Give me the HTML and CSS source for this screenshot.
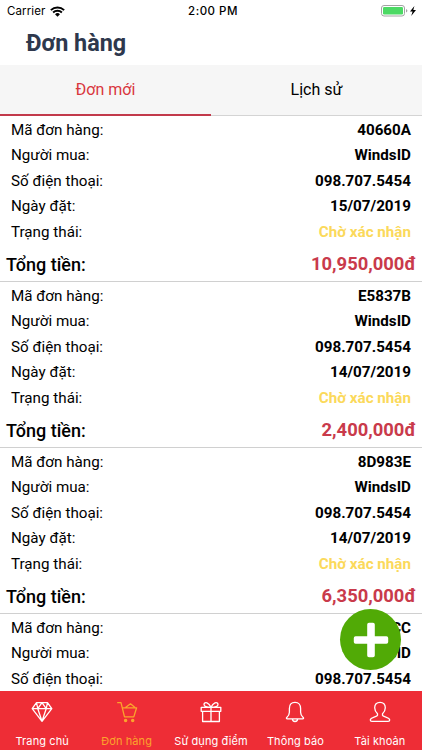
FILE: index.html
```
<!DOCTYPE html>
<html lang="vi">
<head>
    <meta charset="UTF-8">
    <meta name="viewport" content="width=device-width, initial-scale=1.0">
    <title>Đơn hàng</title>
    <link rel="stylesheet" href="styles.css">
</head>
<body>

    <div class="status-bar">
        <div class="carrier">
            <span>Carrier</span>
            <svg class="wifi" viewBox="0 0 14 10" width="15" height="11">
                <path d="M0.8 3.7a9 9 0 0 1 12.4 0M2.9 6a6 6 0 0 1 8.2 0" fill="none" stroke="#000" stroke-width="1.8"/>
                <path d="M7 10L4.7 7.6a3.3 3.3 0 0 1 4.6 0z"/>
            </svg>
        </div>
        <div class="clock">2:00 PM</div>
        <div class="battery">
            <svg viewBox="0 0 38 12" width="38" height="12">
                <rect x="0.5" y="0.5" width="23" height="10.5" rx="2.5" fill="#fff" stroke="#a3a3a3"/>
                <rect x="2" y="2" width="20" height="7.5" rx="1.2" fill="#4cd964"/>
                <path d="M25 4v3.6q1.4-.6 1.4-1.8T25 4z" fill="#a3a3a3"/>
                <path d="M33.4 1L29 6.6h2.6L30.2 11l4.8-5.9h-2.7z"/>
            </svg>
        </div>
    </div>

    <h1 class="page-title">Đơn hàng</h1>

    <div class="tabs">
        <div class="tab active">Đơn mới</div>
        <div class="tab">Lịch sử</div>
    </div>

    <div class="orders">
        <div class="order">
            <div class="row"><span>Mã đơn hàng:</span><b>40660A</b></div>
            <div class="row"><span>Người mua:</span><b>WindsID</b></div>
            <div class="row"><span>Số điện thoại:</span><b>098.707.5454</b></div>
            <div class="row"><span>Ngày đặt:</span><b>15/07/2019</b></div>
            <div class="row"><span>Trạng thái:</span><b class="pending">Chờ xác nhận</b></div>
            <div class="total"><span>Tổng tiền:</span><b>10,950,000đ</b></div>
        </div>
        <div class="order">
            <div class="row"><span>Mã đơn hàng:</span><b>E5837B</b></div>
            <div class="row"><span>Người mua:</span><b>WindsID</b></div>
            <div class="row"><span>Số điện thoại:</span><b>098.707.5454</b></div>
            <div class="row"><span>Ngày đặt:</span><b>14/07/2019</b></div>
            <div class="row"><span>Trạng thái:</span><b class="pending">Chờ xác nhận</b></div>
            <div class="total"><span>Tổng tiền:</span><b>2,400,000đ</b></div>
        </div>
        <div class="order">
            <div class="row"><span>Mã đơn hàng:</span><b>8D983E</b></div>
            <div class="row"><span>Người mua:</span><b>WindsID</b></div>
            <div class="row"><span>Số điện thoại:</span><b>098.707.5454</b></div>
            <div class="row"><span>Ngày đặt:</span><b>14/07/2019</b></div>
            <div class="row"><span>Trạng thái:</span><b class="pending">Chờ xác nhận</b></div>
            <div class="total"><span>Tổng tiền:</span><b>6,350,000đ</b></div>
        </div>
        <div class="order">
            <div class="row"><span>Mã đơn hàng:</span><b>CC</b></div>
            <div class="row"><span>Người mua:</span><b>WindsID</b></div>
            <div class="row"><span>Số điện thoại:</span><b>098.707.5454</b></div>
        </div>
    </div>

    <button class="add-button" aria-label="Thêm đơn hàng">
        <svg viewBox="0 0 36 36" width="36" height="36">
            <path d="M16 .8h4a1.8 1.8 0 0 1 1.8 1.8v11.6h11.6a1.8 1.8 0 0 1 1.8 1.8v4a1.8 1.8 0 0 1-1.8 1.8H21.8v11.6a1.8 1.8 0 0 1-1.8 1.8h-4a1.8 1.8 0 0 1-1.8-1.8V21.8H2.6A1.8 1.8 0 0 1 .8 20v-4a1.8 1.8 0 0 1 1.8-1.8h11.6V2.6A1.8 1.8 0 0 1 16 .8z" fill="#fff"/>
        </svg>
    </button>

    <div class="nav">
        <div class="nav-item">
            <!-- diamond -->
            <svg viewBox="0 0 24 24" width="24" height="24">
                <path d="M6.5 2.7h11l4.3 6L12 21.3 2.2 8.7zM2.2 8.7h19.6M6.5 2.7l1.3 6L12 21.3l4.2-12.6 1.3-6M7.8 8.7L12 2.7l4.2 6"/>
            </svg>
            <span>Trang chủ</span>
        </div>
        <div class="nav-item active">
            <!-- cart -->
            <svg viewBox="0 0 24 24" width="24" height="24">
                <path d="M2.2 2.7H6l3.5 14.2h9.3l2.8-9.1H7.3M10.5 7.6l5-3.8L20 7.6"/>
                <circle class="wheel" cx="10.6" cy="20.4" r="1.1"/>
                <circle class="wheel" cx="17.7" cy="20.4" r="1.1"/>
            </svg>
            <span>Đơn hàng</span>
        </div>
        <div class="nav-item">
            <!-- gift -->
            <svg viewBox="0 0 24 24" width="24" height="24">
                <path d="M2.2 7.3h19.6v4H2.2zM3.6 11.3h16.8v10.2H3.6zM12 7.3v14.2M12 7.3C9.5 7.3 5 6.8 5 4.5 5 2.9 6.6 2.4 8 2.9c2 .7 3.2 2.6 4 4.4zM12 7.3c2.5 0 7-.5 7-2.8 0-1.6-1.6-2.1-3-1.6-2 .7-3.2 2.6-4 4.4z"/>
            </svg>
            <span>Sử dụng điểm</span>
        </div>
        <div class="nav-item">
            <!-- bell -->
            <svg viewBox="0 0 24 24" width="24" height="24">
                <path d="M12 2.4c-3.8 0-5.6 2.7-5.6 6v3.8c0 2.6-1.1 4-2.6 5.3-.7.7-.3 1.3.5 1.3h15.4c.8 0 1.2-.6.5-1.3-1.5-1.3-2.6-2.7-2.6-5.3V8.4c0-3.3-1.8-6-5.6-6zM9.4 18.8c0 3.6 5.2 3.6 5.2 0"/>
            </svg>
            <span>Thông báo</span>
        </div>
        <div class="nav-item">
            <!-- user -->
            <svg viewBox="0 0 24 24" width="24" height="24">
                <path d="M12 2.3c-3.4 0-5.3 2.2-5.3 5.4 0 2.6 1 4.4 2.8 6.1v1.5c-.4 1.4-7.2 2-7.2 4.7 0 1.1.6 1.4 1.6 1.4h16.2c1 0 1.6-.3 1.6-1.4 0-2.7-6.8-3.3-7.2-4.7v-1.5c1.8-1.7 2.8-3.5 2.8-6.1 0-3.2-1.9-5.4-5.3-5.4z"/>
            </svg>
            <span>Tài khoản</span>
        </div>
    </div>

</body>
</html>
```
FILE: styles.css
```
* {
    margin: 0;
    padding: 0;
    box-sizing: border-box;
}

body {
    background-color: #fff;
    color: #000;
    font-family: Roboto, sans-serif;
    display: flex;
    flex-direction: column;
    height: 100vh;
    overflow: hidden;
    position: relative;
}

/* Status bar */
.status-bar {
    display: grid;
    grid-template-columns: 1fr auto 1fr;
    align-items: center;
    height: 22px;
    flex: none;
    padding: 0 3px 0 7px;
    font-family: Inter, sans-serif;
    font-size: 11.5px;
}

.carrier {
    display: flex;
    align-items: center;
    gap: 5px;
    letter-spacing: 0.1px;
}

.clock {
    font-weight: 500;
    letter-spacing: 0.5px;
}

.battery {
    display: flex;
    justify-content: flex-end;
}

.page-title {
    height: 43px;
    flex: none;
    padding-left: 26px;
    color: #2e384d;
    font-size: 23.4px;
    font-weight: 700;
    line-height: 43px;
}

/* Tabs */
.tabs {
    display: flex;
    height: 51px;
    flex: none;
    background-color: #f6f6f6;
}

.tab {
    flex: 1;
    border-bottom: 1px solid #d4d4d4;
    font-size: 16px;
    line-height: 49px;
    text-align: center;
}

.tab.active {
    color: #d9363e;
    border-bottom: 2px solid #c23a4b;
}

/* Orders */
.orders {
    flex: 1;
    overflow: hidden;
}

.order {
    height: 166px;
    padding: 2px 6px 0;
    border-bottom: 1px solid #d0d0d0;
}

.row {
    display: flex;
    justify-content: space-between;
    height: 25.4px;
    padding: 0 5px;
    font-size: 15.2px;
    line-height: 25.4px;
}

.row b {
    font-weight: 700;
}

.row .pending {
    color: #fbd95b;
}

.total {
    display: flex;
    justify-content: space-between;
    font-size: 18px;
    font-weight: 500;
    line-height: 39px;
}

.total b {
    color: #c93a4b;
    font-size: 18.4px;
    font-weight: 700;
    line-height: 37px;
}

.add-button {
    position: absolute;
    right: 21px;
    bottom: 80px;
    display: flex;
    align-items: center;
    justify-content: center;
    width: 61px;
    height: 61px;
    border: none;
    border-radius: 50%;
    background-color: #51aa06;
}

/* Bottom navigation */
.nav {
    display: flex;
    height: 59px;
    flex: none;
    background-color: #ee2d36;
    color: #fff;
    font-family: Inter, sans-serif;
    font-size: 11px;
}

.nav-item {
    flex: 1;
    display: flex;
    flex-direction: column;
    align-items: center;
    gap: 10px;
    padding-top: 9px;
    line-height: 14px;
    letter-spacing: 0.1px;
    white-space: nowrap;
}

.nav-item svg {
    fill: none;
    stroke: currentColor;
    stroke-width: 1.3;
    stroke-linejoin: round;
}

.nav-item .wheel {
    fill: currentColor;
}

.nav-item.active {
    color: #fba42c;
}
```
